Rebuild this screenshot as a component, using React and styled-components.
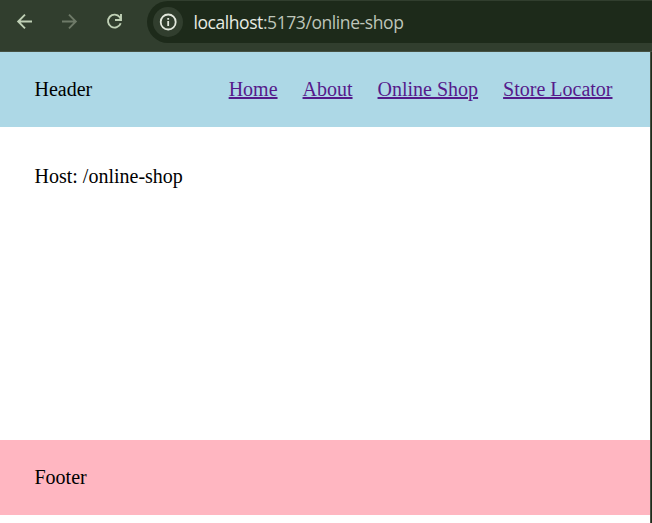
import React from "react";
import styled, { createGlobalStyle } from "styled-components";

const GlobalStyle = createGlobalStyle`
  * { box-sizing: border-box; }
  body { margin: 0; background: #fff; overflow: hidden; }
`;

const Window = styled.div`
  display: flex;
  flex-direction: column;
  height: 523px;
  width: 652px;
  overflow: hidden;
`;

const Toolbar = styled.div`
  display: flex;
  align-items: flex-start;
  flex: 0 0 52px;
  padding-top: 1px;
  background: #313e2e;
  border-bottom: 1px solid #465143;
`;

const ToolButtons = styled.div`
  display: flex;
  flex: 0 0 147px;
  height: 41px;
  padding-left: 12px;
  gap: 20px;
  align-items: center;
`;

const ToolButton = styled.button`
  display: flex;
  width: 25px;
  height: 25px;
  padding: 0;
  border: 0;
  background: none;
  color: ${(p) => (p.$muted ? "#6e7a68" : "#bfd0b5")};
`;

const AddressBar = styled.div`
  display: flex;
  align-items: center;
  flex: 1;
  height: 42px;
  padding-left: 6px;
  border-radius: 21px 0 0 21px;
  background: #1d2a1a;
`;

const SiteInfo = styled.span`
  display: flex;
  align-items: center;
  justify-content: center;
  width: 30px;
  height: 30px;
  border-radius: 50%;
  background: #313e2e;
  color: #e2e7dd;
`;

const Url = styled.span`
  margin-left: 10.4px;
  font: 17.5px/24px "Open Sans", sans-serif;
  letter-spacing: -0.42px;
  color: #bec5b9;
  white-space: nowrap;
`;

const Host = styled.span`
  color: #e7ebe3;
`;

const Viewport = styled.div`
  display: flex;
  flex: 1;
  min-height: 0;
`;

const Page = styled.div`
  display: flex;
  flex-direction: column;
  flex: 1;
  font: 20px/23px "Liberation Serif", "Times New Roman", serif;
  color: #000;
  background: #fff;
`;

const WindowEdge = styled.div`
  flex: 0 0 2px;
  border-left: 1px solid #465143;
  background: #1d2a1a;
`;

const Bar = styled.div`
  display: flex;
  align-items: center;
  justify-content: space-between;
  flex: 0 0 75px;
  padding: 0 37.5px 0 34.5px;
  background: ${(p) => p.$color};
`;

const Nav = styled.nav`
  display: flex;
  gap: 25px;
`;

const NavLink = styled.a`
  color: #551a8b;
  text-decoration: underline;
  text-decoration-thickness: 2px;
  text-underline-offset: 1px;
`;

const Main = styled.main`
  flex: 0 0 313px;
  padding: 38px 34.5px;
`;

const links = ["Home", "About", "Online Shop", "Store Locator"];

function Icon({ d, size = 25 }) {
  return (
    <svg width={size} height={size} viewBox="0 0 25 25" fill="none" stroke="currentColor" strokeWidth="1.9">
      <path d={d} />
    </svg>
  );
}

export default function App() {
  return (
    <Window>
      <GlobalStyle />
      <Toolbar>
        <ToolButtons>
          <ToolButton aria-label="Back">
            <Icon d="M20 12.5H6.5M13 5.7L6.2 12.5L13 19.3" />
          </ToolButton>
          <ToolButton aria-label="Forward" $muted>
            <Icon d="M5 12.5H18.5M12 5.7L18.8 12.5L12 19.3" />
          </ToolButton>
          <ToolButton aria-label="Reload">
            <Icon d="M18.7 14.2A6.5 6.5 0 1 1 17.8 8.3L19 10.5M19 5V11H13" />
          </ToolButton>
        </ToolButtons>
        <AddressBar>
          <SiteInfo>
            <svg width="20" height="20" viewBox="0 0 20 20" fill="none" stroke="currentColor" strokeWidth="1.8">
              <circle cx="10.2" cy="10" r="7.5" />
              <path d="M10.2 9V14M10.2 6V7.8" />
            </svg>
          </SiteInfo>
          <Url><Host>localhost</Host>:5173/online-shop</Url>
        </AddressBar>
      </Toolbar>
      <Viewport>
        <Page>
          <Bar as="header" $color="#add8e6">
            <span>Header</span>
            <Nav>
              {links.map((label) => (
                <NavLink href="#" key={label}>{label}</NavLink>
              ))}
            </Nav>
          </Bar>
          <Main>Host: /online-shop</Main>
          <Bar as="footer" $color="#ffb6c1">
            <span>Footer</span>
          </Bar>
        </Page>
        <WindowEdge />
      </Viewport>
    </Window>
  );
}
